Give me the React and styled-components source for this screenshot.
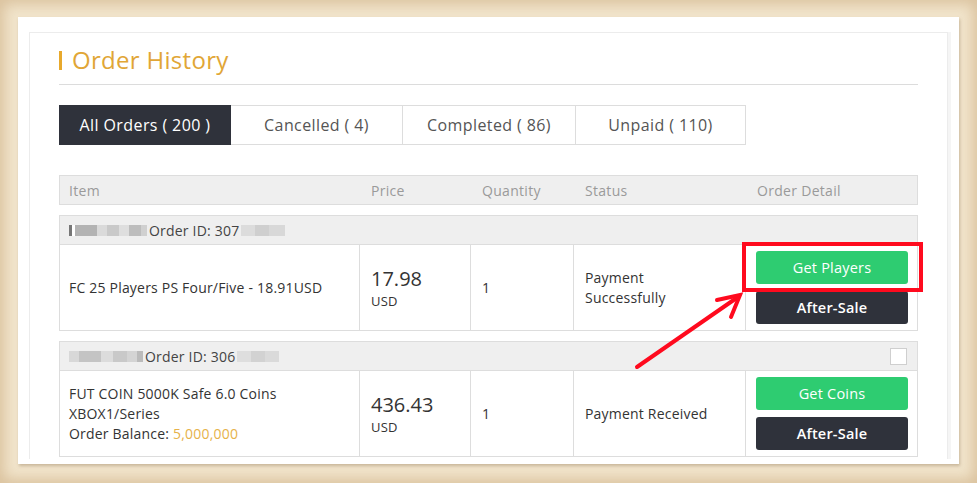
import React from "react";
import styled, { createGlobalStyle } from "styled-components";

const Global = createGlobalStyle`
  html, body { margin: 0; padding: 0; }
  body {
    width: 977px; height: 483px; overflow: hidden;
    font-family: "Open Sans", "Liberation Sans", sans-serif;
  }
  * { box-sizing: border-box; }
`;

const Frame = styled.div`
  position: relative;
  width: 977px;
  height: 483px;
  padding: 17px 18px 0 18px;
  background: #f2e5cc;
  box-shadow: inset 0 0 14px 4px rgba(196, 160, 112, 0.5);
`;

const Card = styled.div`
  height: 447px;
  background: #fff;
  padding: 15px 11px 5px 11px;
  box-shadow: 1px 2px 3px rgba(120, 95, 60, 0.35);
`;

const Panel = styled.div`
  height: 100%;
  overflow: hidden;
  border: 1px solid #ececec;
  border-bottom: none;
  padding: 0 29px;
  box-shadow: 3px 0 0 #f5f5f5;
`;

const Title = styled.h1`
  margin: 0;
  padding: 14px 0 11px 0;
  border-bottom: 1px solid #dcdcdc;
  display: flex;
  align-items: center;
  gap: 10px;
  font-size: 24px;
  letter-spacing: 0.3px;
  line-height: 26px;
  font-weight: 400;
  color: #e1a636;
  &::before {
    content: "";
    width: 3px;
    height: 19px;
    background: #e8a92c;
  }
`;

const Tabs = styled.div`
  display: flex;
  margin-top: 20px;
`;

const Tab = styled.div`
  width: ${(p) => p.w}px;
  height: 40px;
  display: flex;
  align-items: center;
  justify-content: center;
  font-size: 16px;
  letter-spacing: 0.4px;
  border: 1px solid ${(p) => (p.active ? "#2f323b" : "#dddddd")};
  border-left: ${(p) => (p.first ? undefined : "none")};
  background: ${(p) => (p.active ? "#2f323b" : "#fff")};
  color: ${(p) => (p.active ? "#fff" : "#555")};
`;

const cols = "300px 111px 103px 172px 173px";

const HeadRow = styled.div`
  margin-top: 30px;
  display: grid;
  grid-template-columns: ${cols};
  height: 30px;
  background: #efefef;
  border: 1px solid #dddddd;
  font-size: 14px;
  letter-spacing: 0.3px;
  color: #9a9a9a;
`;

const HeadCell = styled.div`
  display: flex;
  align-items: center;
  padding-left: ${(p) => (p.first ? 9 : 11)}px;
`;

const Group = styled.div`
  margin-top: 10px;
  border: 1px solid #dddddd;
`;

const GroupHead = styled.div`
  height: 29px;
  background: #efefef;
  border-bottom: 1px solid #dddddd;
  display: flex;
  align-items: center;
  padding: 0 10px 0 9px;
  font-size: 14px;
  letter-spacing: 0.2px;
  color: #444;
`;

const Blur = styled.span`
  display: inline-block;
  height: 11px;
  width: ${(p) => p.w}px;
  background: ${(p) => p.c};
  filter: blur(0.6px);
`;

const IdText = styled.span`
  margin: 0 2px;
`;

const Check = styled.span`
  margin-left: auto;
  width: 17px;
  height: 17px;
  background: #fff;
  border: 1px solid #cfcfcf;
`;

const BodyRow = styled.div`
  display: grid;
  grid-template-columns: 299px 111px 103px 172px 172px;
  height: 85px;
`;

const Cell = styled.div`
  display: flex;
  flex-direction: column;
  justify-content: center;
  padding-left: ${(p) => (p.first ? 9 : 11)}px;
  border-left: ${(p) => (p.first ? "none" : "1px solid #dddddd")};
  font-size: 14px;
  letter-spacing: 0.2px;
  line-height: 20px;
  color: #333;
`;

const Price = styled.div`
  font-size: 20px;
  letter-spacing: 0;
  line-height: 26px;
  color: #333;
`;

const Currency = styled.div`
  font-size: 13px;
  line-height: 18px;
  color: #333;
`;

const Gold = styled.span`
  color: #e6b24a;
`;

const Actions = styled.div`
  display: flex;
  flex-direction: column;
  gap: 7px;
  padding: 6px 9px 6px 10px;
  border-left: 1px solid #dddddd;
`;

const Btn = styled.div`
  height: 33px;
  border-radius: 3px;
  display: flex;
  align-items: center;
  justify-content: center;
  font-size: 14.5px;
  letter-spacing: 0.2px;
  font-weight: ${(p) => (p.dark ? 600 : 500)};
  color: #fff;
  background: ${(p) => (p.dark ? "#2f323b" : "#2ecc71")};
`;

const Highlight = styled.div`
  position: absolute;
  left: 742px;
  top: 242px;
  width: 181px;
  height: 50px;
  border: 4px solid #ff0a1e;
  pointer-events: none;
`;

const ArrowSvg = styled.svg`
  position: absolute;
  left: 0;
  top: 0;
  pointer-events: none;
`;

const tabs = [
  { label: "All Orders ( 200 )", w: 172, active: true },
  { label: "Cancelled ( 4)", w: 172 },
  { label: "Completed ( 86)", w: 173 },
  { label: "Unpaid ( 110)", w: 170 },
];

const heads = ["Item", "Price", "Quantity", "Status", "Order Detail"];

export default function App() {
  return (
    <>
      <Global />
      <Frame>
        <Card>
          <Panel>
            <Title>Order History</Title>
            <Tabs>
              {tabs.map((t, i) => (
                <Tab key={t.label} w={t.w} active={t.active} first={i === 0}>
                  {t.label}
                </Tab>
              ))}
            </Tabs>
            <HeadRow>
              {heads.map((h, i) => (
                <HeadCell key={h} first={i === 0}>
                  {h}
                </HeadCell>
              ))}
            </HeadRow>

            <Group>
              <GroupHead>
                <Blur w={3} c="#777" />
                <Blur w={3} c="#fff" />
                <Blur w={22} c="#b3b3b3" />
                <Blur w={10} c="#dadada" />
                <Blur w={12} c="#c9c9c9" />
                <Blur w={10} c="#dedede" />
                <Blur w={12} c="#bdbdbd" />
                <Blur w={6} c="#d0d0d0" />
                <IdText>Order ID: 307</IdText>
                <Blur w={14} c="#dcdcdc" />
                <Blur w={14} c="#cfcfcf" />
                <Blur w={16} c="#d8d8d8" />
              </GroupHead>
              <BodyRow>
                <Cell first>FC 25 Players PS Four/Five - 18.91USD</Cell>
                <Cell>
                  <Price>17.98</Price>
                  <Currency>USD</Currency>
                </Cell>
                <Cell>1</Cell>
                <Cell>
                  Payment
                  <br />
                  Successfully
                </Cell>
                <Actions>
                  <Btn>Get Players</Btn>
                  <Btn dark>After-Sale</Btn>
                </Actions>
              </BodyRow>
            </Group>

            <Group>
              <GroupHead>
                <Blur w={10} c="#d8d8d8" />
                <Blur w={22} c="#c4c4c4" />
                <Blur w={12} c="#dcdcdc" />
                <Blur w={14} c="#c9c9c9" />
                <Blur w={10} c="#d4d4d4" />
                <Blur w={6} c="#bbbbbb" />
                <IdText>Order ID: 306</IdText>
                <Blur w={14} c="#dedede" />
                <Blur w={14} c="#d2d2d2" />
                <Blur w={14} c="#dadada" />
                <Check />
              </GroupHead>
              <BodyRow>
                <Cell first>
                  FUT COIN 5000K Safe 6.0 Coins
                  <br />
                  XBOX1/Series
                  <br />
                  <span>
                    Order Balance: <Gold>5,000,000</Gold>
                  </span>
                </Cell>
                <Cell>
                  <Price>436.43</Price>
                  <Currency>USD</Currency>
                </Cell>
                <Cell>1</Cell>
                <Cell>Payment Received</Cell>
                <Actions>
                  <Btn>Get Coins</Btn>
                  <Btn dark>After-Sale</Btn>
                </Actions>
              </BodyRow>
            </Group>
          </Panel>
        </Card>
        <Highlight />
        <ArrowSvg width="977" height="483" viewBox="0 0 977 483">
          <g stroke="#ff0a1e" strokeWidth="4" strokeLinecap="round" fill="none">
            <line x1="637" y1="367" x2="738" y2="297" />
            <polyline points="717,300 740,295 731,317" strokeLinejoin="miter" />
          </g>
        </ArrowSvg>
      </Frame>
    </>
  );
}
